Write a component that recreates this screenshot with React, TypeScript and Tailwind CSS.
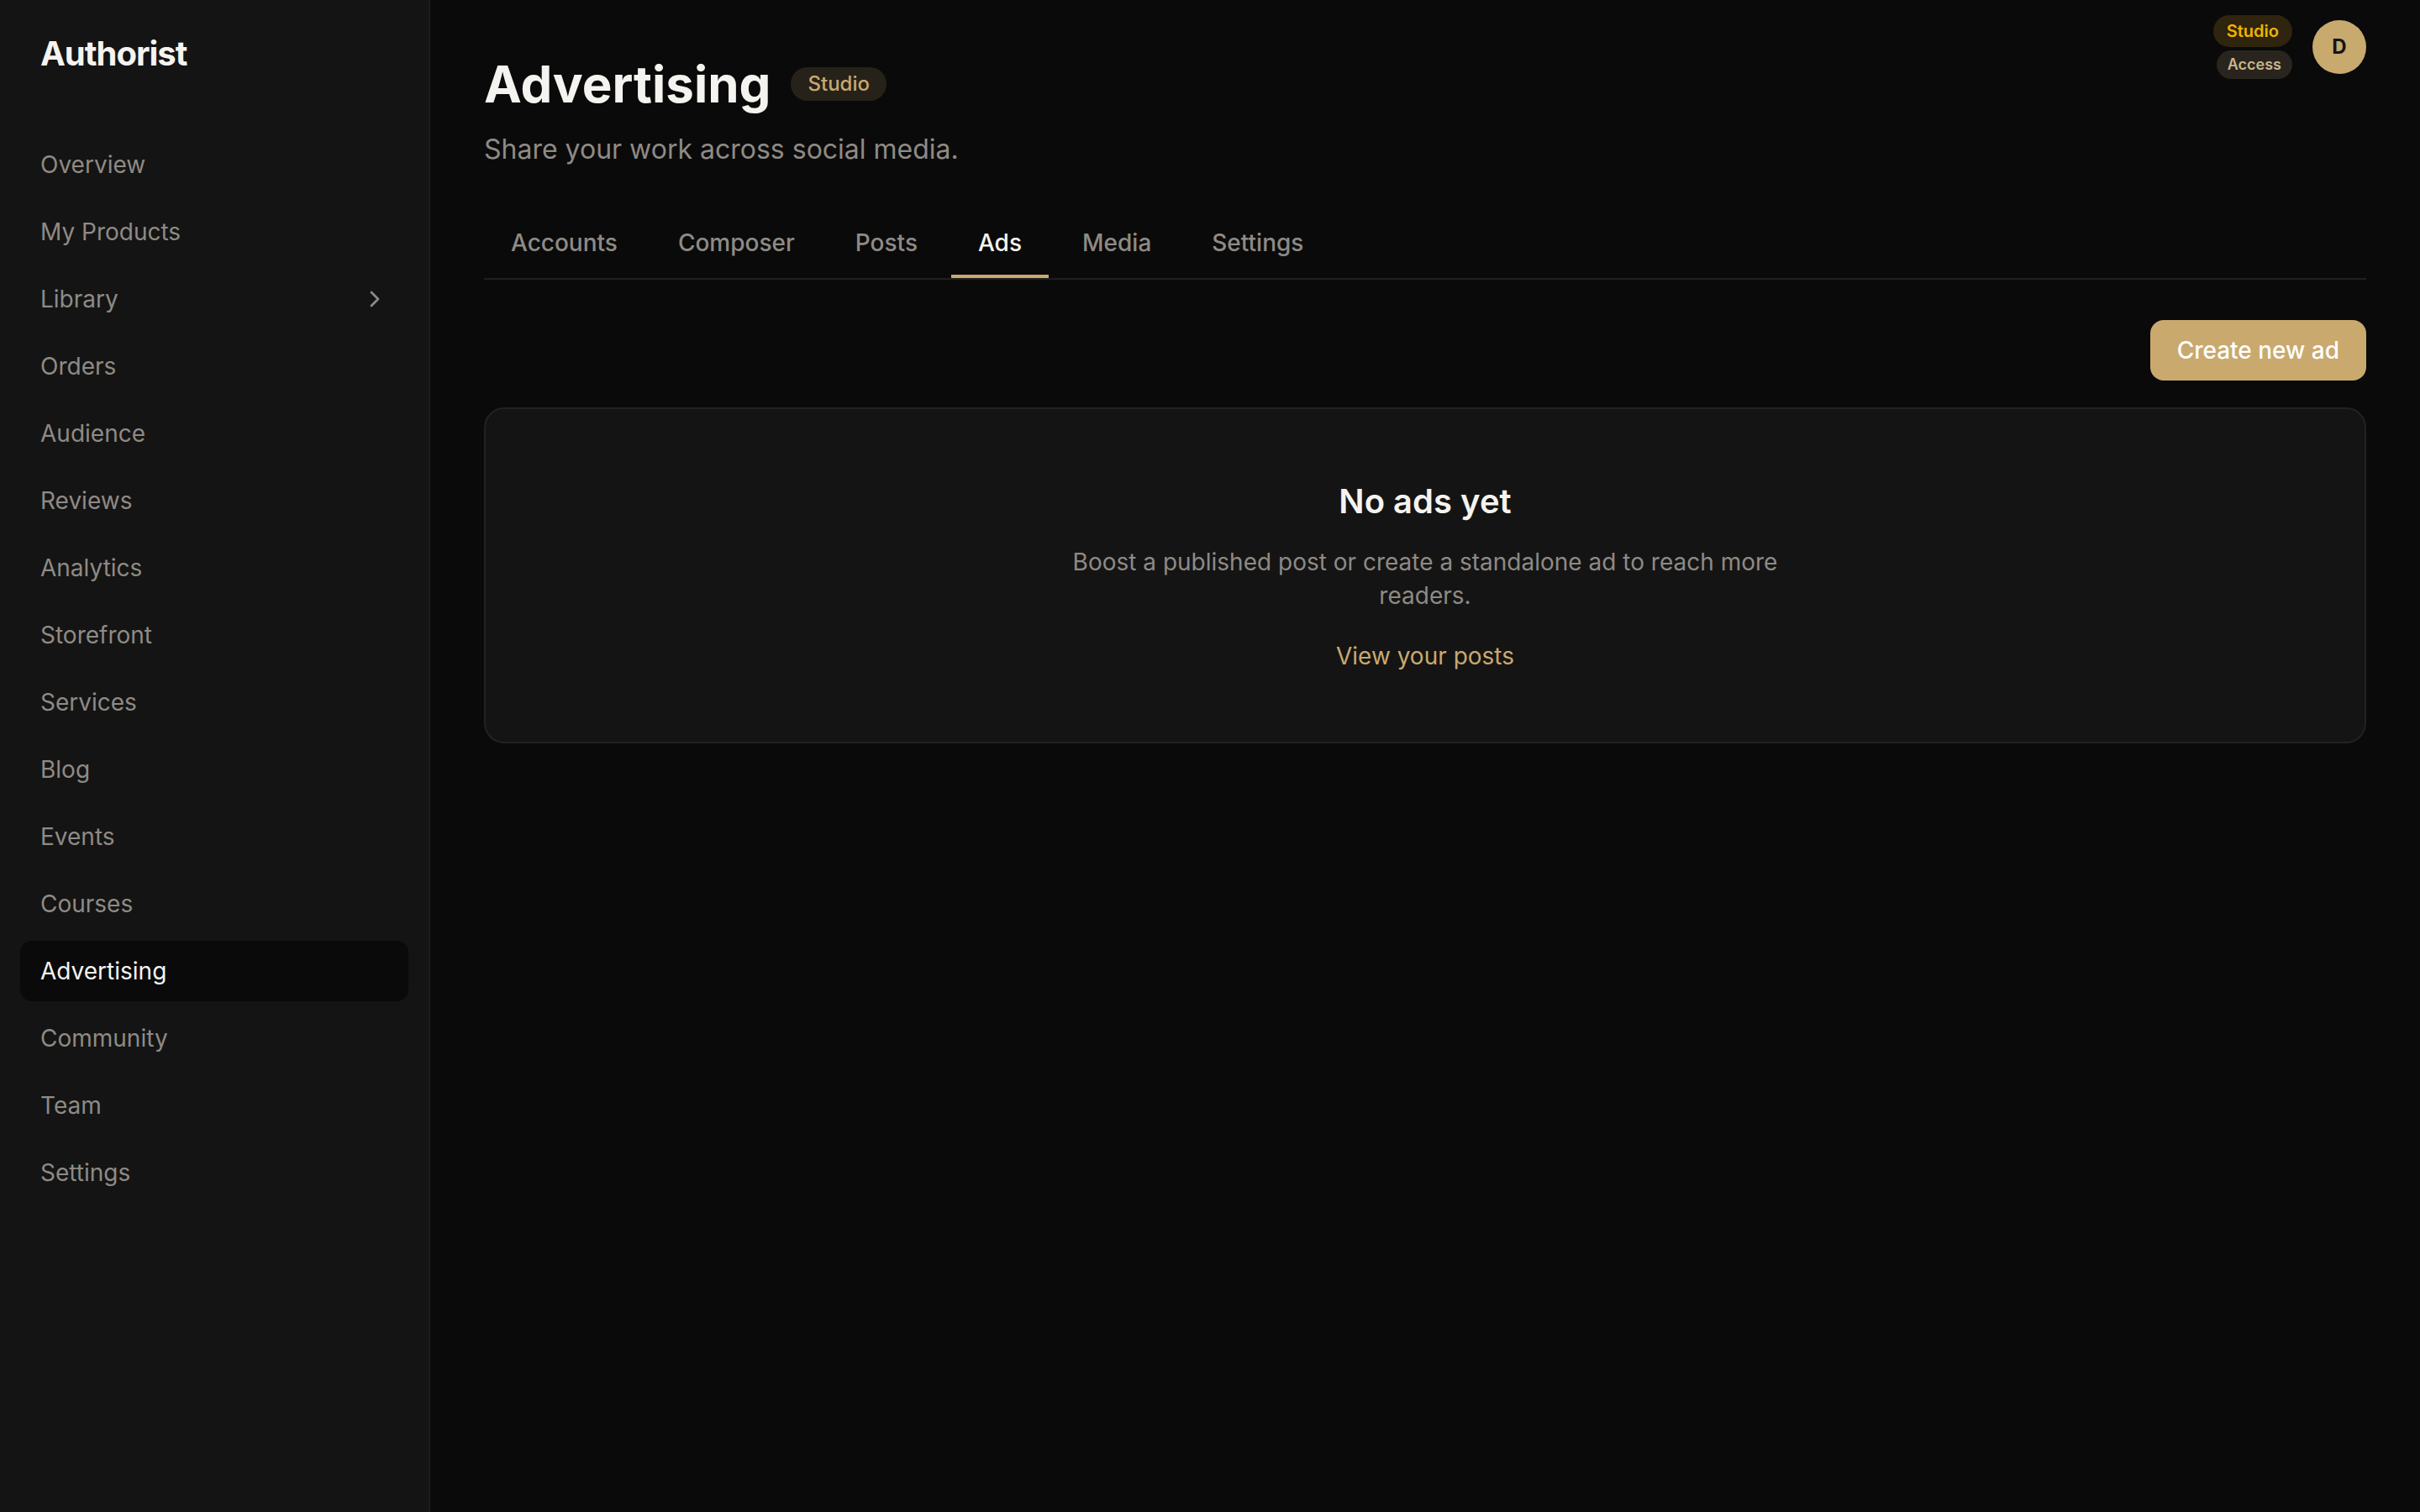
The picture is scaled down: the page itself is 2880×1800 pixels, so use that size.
import { ChevronRight } from "lucide-react";

const navItems = [
  { label: "Overview" },
  { label: "My Products" },
  { label: "Library", hasChildren: true },
  { label: "Orders" },
  { label: "Audience" },
  { label: "Reviews" },
  { label: "Analytics" },
  { label: "Storefront" },
  { label: "Services" },
  { label: "Blog" },
  { label: "Events" },
  { label: "Courses" },
  { label: "Advertising", active: true },
  { label: "Community" },
  { label: "Team" },
  { label: "Settings" },
];

const tabs = ["Accounts", "Composer", "Posts", "Ads", "Media", "Settings"];

function Sidebar() {
  return (
    <aside className="flex w-[512px] shrink-0 flex-col border-r-2 border-[#1c1c1c] bg-[#141414]">
      <div className="px-[48px] pt-[36px]">
        <p className="text-[40px] leading-[56px] font-bold tracking-tight text-[#f5f3ef]">Authorist</p>
      </div>
      <nav className="mt-[68px] flex flex-col gap-[8px] px-[24px]">
        {navItems.map((item) => (
          <a
            key={item.label}
            href="#"
            className={
              item.active
                ? "flex items-center justify-between rounded-[14px] bg-[#0a0a0a] px-[24px] py-[16px] text-[28px] leading-[40px] text-[#f5f3ef]"
                : "flex items-center justify-between rounded-[14px] px-[24px] py-[16px] text-[28px] leading-[40px] text-[#8f8a85]"
            }
          >
            <span>{item.label}</span>
            {item.hasChildren && <ChevronRight className="h-[32px] w-[32px] text-[#8f8a85]" strokeWidth={2} />}
          </a>
        ))}
      </nav>
    </aside>
  );
}

export default function App() {
  return (
    <div className="flex min-h-screen bg-[#0a0a0a] font-['Inter',sans-serif]">
      <Sidebar />
      <main className="relative flex-1 pt-[64px] pr-[64px] pl-[64px]">
        <div className="absolute top-[18px] right-[64px] flex items-center gap-[24px]">
          <div className="flex flex-col items-end gap-[4px]">
            <span className="rounded-full bg-[#2f240d] px-[16px] py-[5px] text-[20px] leading-[28px] font-semibold text-[#f2b200]">
              Studio
            </span>
            <span className="rounded-full bg-[#29251e] px-[13px] py-[4px] text-[18px] leading-[26px] font-semibold text-[#c9b48c]">
              Access
            </span>
          </div>
          <div className="flex h-[64px] w-[64px] items-center justify-center rounded-full bg-[#c8a96e] text-[24px] font-bold text-[#141414]">
            D
          </div>
        </div>

        <div className="flex items-center gap-[24px]">
          <h1 className="text-[60px] leading-[72px] font-bold text-[#f5f3ef]">Advertising</h1>
          <span className="rounded-full bg-[#272219] px-[20px] py-[4px] text-[24px] leading-[32px] font-medium text-[#c9a96e]">
            Studio
          </span>
        </div>
        <p className="mt-[18px] text-[32px] leading-[48px] text-[#8f8a85]">Share your work across social media.</p>

        <div className="mt-[38px] flex gap-[8px] border-b-2 border-[#1f1f1f]">
          {tabs.map((tab) => (
            <button
              key={tab}
              className={
                tab === "Ads"
                  ? "border-b-4 border-[#c9a96e] px-[32px] pt-[29px] pb-[18px] text-[28px] leading-[40px] font-medium text-[#f5f3ef]"
                  : "border-b-4 border-transparent px-[32px] pt-[29px] pb-[18px] text-[28px] leading-[40px] font-medium text-[#8f8a85]"
              }
            >
              {tab}
            </button>
          ))}
        </div>

        <div className="mt-[48px] flex justify-end">
          <button className="rounded-[16px] bg-[#c9a96e] px-[32px] py-[16px] text-[28px] leading-[40px] font-medium text-white">
            Create new ad
          </button>
        </div>

        <section className="mt-[32px] flex flex-col items-center rounded-[24px] border-2 border-[#222222] bg-[#141414] px-[48px] pt-[82px] pb-[82px] text-center">
          <h2 className="text-[40px] leading-[56px] font-semibold text-[#f5f3ef]">No ads yet</h2>
          <p className="mt-[24px] max-w-[896px] text-[28px] leading-[40px] text-[#8f8a85]">
            Boost a published post or create a standalone ad to reach more readers.
          </p>
          <a href="#" className="mt-[32px] text-[28px] leading-[40px] text-[#c9a96e]">
            View your posts
          </a>
        </section>
      </main>
    </div>
  );
}
